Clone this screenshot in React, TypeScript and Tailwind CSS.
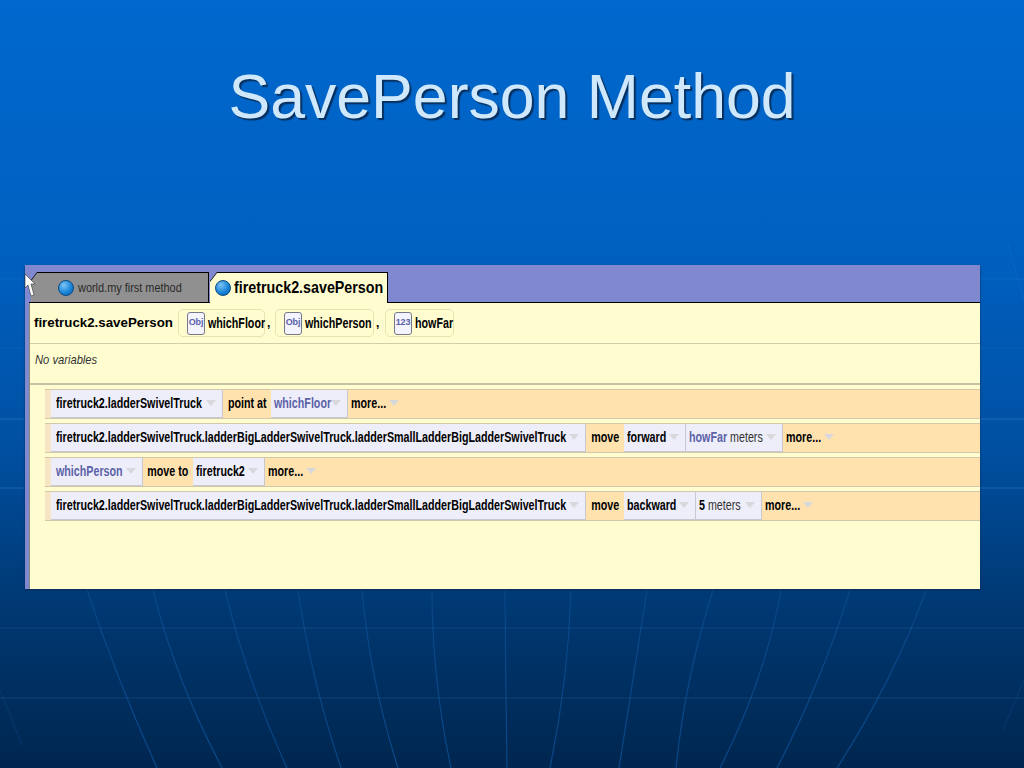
const arcs = [
  [87, 127, 157], [153, 189, 222], [225, 258, 287], [298, 320, 341], [362, 379, 398], [432, 439, 451],
  [505, 506, 507], [571, 562, 550], [647, 630, 619], [713, 686, 676], [781, 751, 720], [850, 810, 777], [926, 878, 837],
]

// the x read at y=698 sits at t=0.607 along the curve
function arcPath([a, b, c]: number[]) {
  const t = 0.607
  const ctrl = (b - (1 - t) * (1 - t) * a - t * t * c) / (2 * t * (1 - t))
  return `M${a} 590 Q${ctrl.toFixed(1)} 679 ${c} 768`
}

function BackdropLines() {
  return (
    <svg className="absolute inset-0 h-full w-full" viewBox="0 0 1024 768" fill="none">
      {arcs.map((arc) => (
        <path key={arc[0]} d={arcPath(arc)} stroke="#0a4888" strokeWidth="1.2" />
      ))}
      <path d="M0 690 L22 745" stroke="#0a4888" strokeWidth="1" opacity="0.5" />
      <path d="M1024 680 L1003 730" stroke="#0a4888" strokeWidth="1" opacity="0.5" />
      <path d="M1008 245 L1024 300" stroke="#5aa0e8" strokeWidth="1" opacity="0.12" />
      {[279, 348].map((y) => (
        <path key={y} d={`M0 ${y} H1024`} stroke="#5aa0e8" strokeWidth="1" opacity="0.14" />
      ))}
      {[419, 488].map((y) => (
        <path key={y} d={`M0 ${y} H1024`} stroke="#5aa0e8" strokeWidth="1.2" opacity="0.32" />
      ))}
      {[628, 698].map((y) => (
        <path key={y} d={`M0 ${y} H1024`} stroke="#5aa0e8" strokeWidth="1.2" opacity="0.16" />
      ))}
    </svg>
  )
}

function Ball() {
  return (
    <span className="h-[16px] w-[16px] shrink-0 rounded-full border border-[#0a4a80] bg-[radial-gradient(circle_at_35%_30%,#7cc4f4,#1a86d8_55%,#0a5aa8)]" />
  )
}

function Arrow() {
  return (
    <svg className="ml-[3px] shrink-0" width="10" height="6" viewBox="0 0 10 6">
      <path d="M0 0 H10 L5 6 Z" fill="#d8d8dc" />
    </svg>
  )
}

// capture shows a squeezed Arial, no narrow face is installed so scale it
function Narrow({ children }: { children: React.ReactNode }) {
  return <span className="inline-block origin-left scale-x-[0.765] whitespace-nowrap">{children}</span>
}

function Chip({ w, first, children }: { w: number; first?: boolean; children: React.ReactNode }) {
  return (
    <div
      style={{ width: w }}
      className={`flex h-[28px] shrink-0 items-center border-r border-b border-[#c8c8d0] bg-[#eeeefa] pr-[6px] pb-px text-[14px] font-bold text-black ${first ? "pl-[5px]" : "pl-[3px]"}`}
    >
      <div className="min-w-0 flex-1">
        <Narrow>{children}</Narrow>
      </div>
      <Arrow />
    </div>
  )
}

function Word({ children, w }: { children: React.ReactNode; w: number }) {
  return (
    <div style={{ width: w }} className="flex shrink-0 justify-center pb-[2px] text-[14px] font-bold text-black">
      <span className="inline-block scale-x-[0.765] whitespace-nowrap">{children}</span>
    </div>
  )
}

function More() {
  return (
    <div className="ml-[3px] flex items-center pb-[2px] text-[14px] font-bold text-black">
      <div className="w-[35px]">
        <Narrow>more...</Narrow>
      </div>
      <Arrow />
    </div>
  )
}

function Row({ children }: { children: React.ReactNode }) {
  return (
    <div className="flex h-[30px] items-center border-y border-[#d4c8ac] bg-[#ffe2ae]">
      <div className="h-full w-[6px] shrink-0 rounded-l-[3px] bg-[#f6e6c6] bg-[radial-gradient(#b89a60_0.6px,transparent_0.7px)] bg-[length:2px_2px]" />
      {children}
    </div>
  )
}

function Param({ kind, name, w }: { kind: string; name: string; w: number }) {
  return (
    <div
      style={{ width: w }}
      className="flex h-[28px] shrink-0 items-center rounded-[5px] border border-[#e6e2b4] bg-[#fffdd0]"
    >
      <div className="h-full w-[7px] shrink-0 rounded-l-[5px] bg-[radial-gradient(#a8a070_0.6px,transparent_0.7px)] bg-[length:2px_2px]" />
      <div className="ml-[1px] flex h-[23px] w-[18px] shrink-0 items-center justify-center rounded-[3px] border border-[#777788] bg-[#f4f4ff] text-[9px] font-bold tracking-[-0.02em] text-[#5a60a8]">
        {kind}
      </div>
      <div className="ml-[3px] min-w-0 flex-1 text-[14px] font-bold text-black">
        <Narrow>{name}</Narrow>
      </div>
    </div>
  )
}

const longName = "firetruck2.ladderSwivelTruck.ladderBigLadderSwivelTruck.ladderSmallLadderBigLadderSwivelTruck"

export default function App() {
  return (
    <div className="relative h-[768px] w-[1024px] overflow-hidden bg-[linear-gradient(180deg,#0068ce_0%,#0060c0_33%,#0050a2_58%,#003a76_77%,#00264f_100%)] font-['Liberation_Sans',sans-serif]">
      <BackdropLines />

      <div className="relative pl-[25px] pt-[61px]">
        <h1 className="pr-[25px] text-center text-[62.6px] leading-[70px] text-[#cfe8fb] [text-shadow:2px_2px_1px_#06305f]">
          SavePerson Method
        </h1>

        <div className="mt-[134px] flex h-[324px] w-[955px] flex-col bg-[#8088d0] pl-[4px] shadow-[0_1px_2px_#0a2c55]">
          {/* tab strip */}
          <div className="flex h-[38px] shrink-0 items-end border-b border-black pl-[2px]">
            <div className="h-[30px] w-[178px] bg-black [clip-path:polygon(6px_0,100%_0,100%_100%,0_100%,0_8px)]">
              <div className="mt-px flex h-[29px] w-[177px] items-center bg-[#909090] pl-[27px] text-[13px] text-[#2a2a2a] [clip-path:polygon(6px_0,100%_0,100%_100%,0_100%,0_8px)]">
                <Ball />
                <div className="ml-[4px] min-w-0 flex-1">
                  <span className="inline-block origin-left scale-x-[0.84] whitespace-nowrap">world.my first method</span>
                </div>
              </div>
            </div>
            <div className="-mb-px ml-px h-[31px] w-[178px] bg-black [clip-path:polygon(7px_0,100%_0,100%_100%,0_100%,0_9px)]">
              <div className="mt-px flex h-[30px] w-[177px] items-center bg-[#fffdd0] pl-[5px] text-[17px] text-black [clip-path:polygon(7px_0,100%_0,100%_100%,0_100%,0_9px)]">
                <Ball />
                <div className="ml-[3px] min-w-0 flex-1 font-bold">
                  <span className="inline-block origin-left scale-x-[0.84] whitespace-nowrap">firetruck2.savePerson</span>
                </div>
              </div>
            </div>
          </div>

          <div className="flex flex-1 flex-col border-l border-[#8a8a7a] bg-[#fffdd0]">
            <div className="flex h-[41px] shrink-0 items-center border-b border-[#cfcdaa] pl-[4px]">
              <span className="w-[144px] shrink-0 whitespace-nowrap text-[13.3px] font-bold text-black">firetruck2.savePerson</span>
              <Param kind="Obj" name="whichFloor" w={87} />
              <span className="w-[10px] shrink-0 pl-[2px] text-[12px] font-bold">,</span>
              <Param kind="Obj" name="whichPerson" w={99} />
              <span className="w-[11px] shrink-0 pl-[2px] text-[12px] font-bold">,</span>
              <Param kind="123" name="howFar" w={69} />
            </div>
            <div className="flex h-[41px] shrink-0 items-center border-b-2 border-[#c4c2a4] pb-[7px] pl-[5px] text-[13px] text-[#333] italic">
              <span className="inline-block origin-left scale-x-[0.86] whitespace-nowrap">No variables</span>
            </div>

            <div className="flex flex-col gap-[4px] pl-[15px] pt-[4px]">
              <Row>
                <Chip w={172} first>firetruck2.ladderSwivelTruck</Chip>
                <Word w={48}>point at</Word>
                <Chip w={77}>
                  <span className="text-[#5c62a8]">whichFloor</span>
                </Chip>
                <More />
              </Row>
              <Row>
                <Chip w={535} first>{longName}</Chip>
                <Word w={38}>move</Word>
                <Chip w={62}>forward</Chip>
                <Chip w={97}>
                  <span className="text-[#5c62a8]">howFar</span> <span className="font-normal text-[#333]">meters</span>
                </Chip>
                <More />
              </Row>
              <Row>
                <Chip w={92} first>
                  <span className="text-[#5c62a8]">whichPerson</span>
                </Chip>
                <Word w={50}>move to</Word>
                <Chip w={72}>firetruck2</Chip>
                <More />
              </Row>
              <Row>
                <Chip w={535} first>{longName}</Chip>
                <Word w={38}>move</Word>
                <Chip w={72}>backward</Chip>
                <Chip w={66}>
                  5 <span className="font-normal text-[#333]">meters</span>
                </Chip>
                <More />
              </Row>
            </div>
          </div>
        </div>
      </div>

      {/* mouse pointer caught in the capture */}
      <svg className="absolute left-[24px] top-[274px]" width="12" height="24" viewBox="0 0 12 24">
        <path d="M1 0 L1 14 L4 11 L7 22 L10 21 L7 10 L11 10 Z" fill="#fff" stroke="#333" strokeWidth="0.6" />
      </svg>
    </div>
  )
}
